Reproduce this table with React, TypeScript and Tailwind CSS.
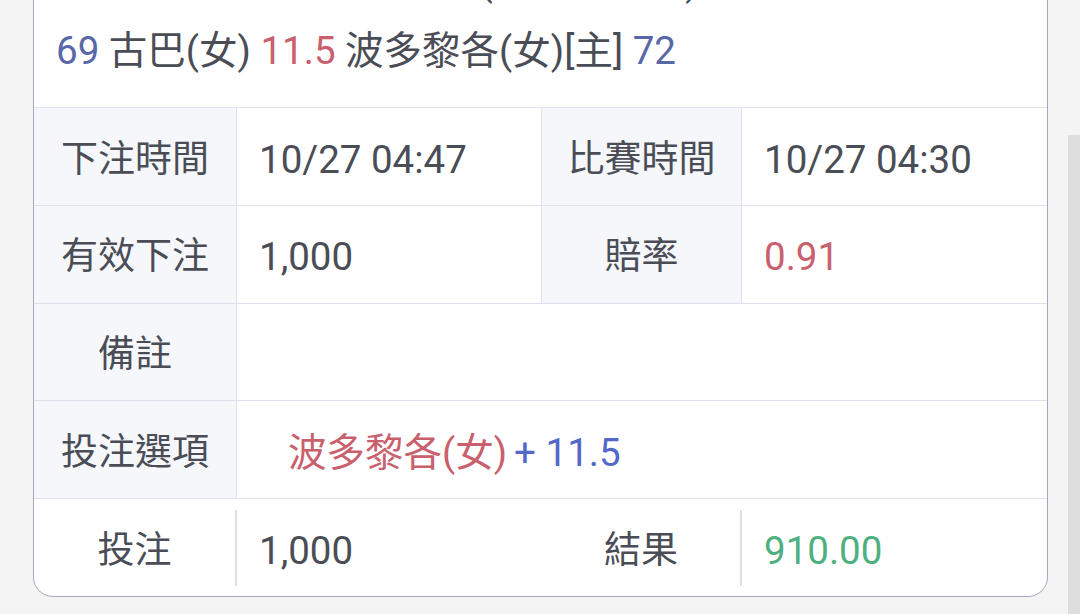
import React from "react";

const border = "border-[#dfe2ec]";

function Label({ children, w }: { children: React.ReactNode; w: string }) {
  return (
    <div className={`flex h-full shrink-0 items-center justify-center border-r ${border} bg-[#f5f7fb] pt-[6px] text-[37px] ${w}`}>
      {children}
    </div>
  );
}

export default function App() {
  return (
    <div className="relative h-[614px] w-[1080px] overflow-hidden bg-[#f4f4f4] font-[family-name:Roboto,'Noto_Sans_CJK_TC',sans-serif] text-[38.5px] text-[#4a4d56]">
      <div className="ml-[33px] mt-[-56px] w-[1015px] rounded-b-[20px] border border-[#a3a7c1] bg-white">
        <div className="pb-[24px] pl-[22px]">
          <div className="whitespace-nowrap leading-[74px]">美洲女子籃球錦標賽資格(小組賽第一)</div>
          <div className="whitespace-nowrap leading-[64px]">
            <span className="text-[#5867a8]">69</span> 古巴(女){" "}
            <span className="text-[#c9606d]">11.5</span> 波多黎各(女)[主]{" "}
            <span className="text-[#5867a8]">72</span>
          </div>
        </div>

        <div className={`flex h-[97.8px] border-t ${border}`}>
          <Label w="w-[203px]">下注時間</Label>
          <div className={`flex h-full w-[305px] shrink-0 items-center border-r ${border} pl-[22px] pt-[6px]`}>10/27 04:47</div>
          <Label w="w-[200px]">比賽時間</Label>
          <div className="flex h-full flex-1 items-center pl-[22px] pt-[6px]">10/27 04:30</div>
        </div>

        <div className={`flex h-[97.8px] border-t ${border}`}>
          <Label w="w-[203px]">有效下注</Label>
          <div className={`flex h-full w-[305px] shrink-0 items-center border-r ${border} pl-[22px] pt-[6px]`}>1,000</div>
          <Label w="w-[200px]">賠率</Label>
          <div className="flex h-full flex-1 items-center pl-[22px] pt-[6px] text-[#c9606d]">0.91</div>
        </div>

        <div className={`flex h-[97.8px] border-t ${border}`}>
          <Label w="w-[203px]">備註</Label>
          <div className="flex h-full flex-1 items-center pl-[22px]"></div>
        </div>

        <div className={`flex h-[97.8px] border-t ${border}`}>
          <Label w="w-[203px]">投注選項</Label>
          <div className="flex h-full flex-1 items-center whitespace-nowrap pl-[51px] pt-[6px]">
            <span className="text-[#c9606d]">波多黎各(女)</span>
            <span className="ml-[7px] text-[#5368c9]">+ 11.5</span>
          </div>
        </div>

        <div className={`flex h-[97.8px] items-center border-t ${border}`}>
          <div className="flex h-full w-[201px] shrink-0 items-center justify-center pt-[6px] text-[37px]">投注</div>
          <div className="h-[76px] w-[2px] shrink-0 bg-[#dcdfe8]" />
          <div className="flex h-full w-[305px] shrink-0 items-center pl-[22px] pt-[6px]">1,000</div>
          <div className="flex h-full w-[198px] shrink-0 items-center justify-center pt-[6px] text-[37px]">結果</div>
          <div className="h-[76px] w-[2px] shrink-0 bg-[#dcdfe8]" />
          <div className="flex h-full flex-1 items-center pl-[22px] pt-[6px] text-[#4fb07f]">910.00</div>
        </div>
      </div>
      <div className="absolute bottom-0 right-0 top-[135px] w-[12px] bg-[#dedede]" />
    </div>
  );
}
